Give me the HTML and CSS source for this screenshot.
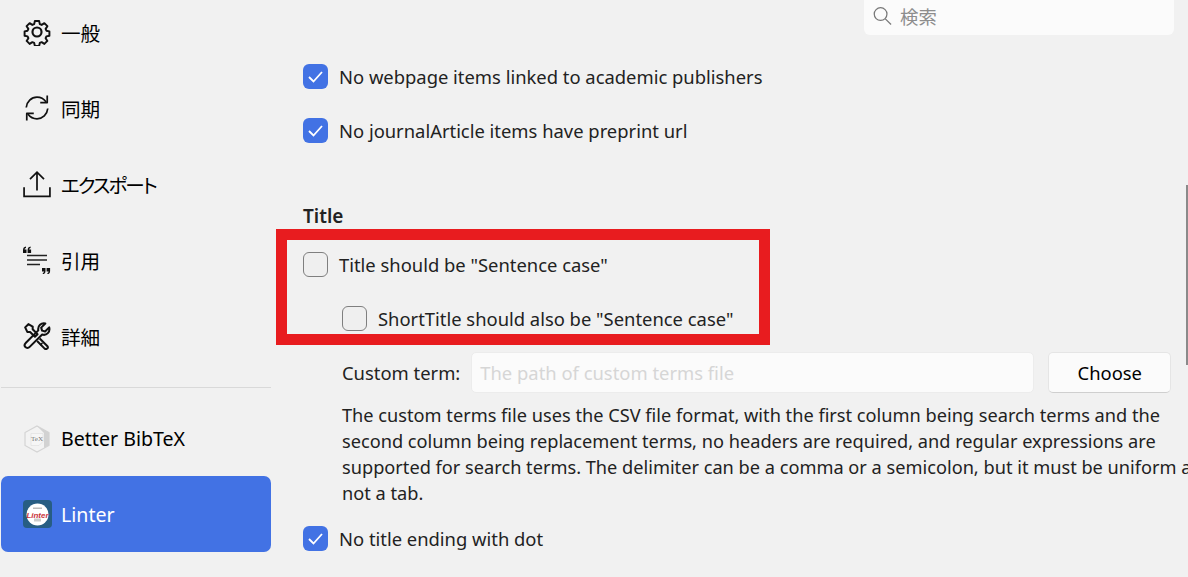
FILE: index.html
```html
<!DOCTYPE html>
<html lang="ja">
<head>
    <meta charset="UTF-8">
    <meta name="viewport" content="width=device-width, initial-scale=1.0">
    <title>Settings</title>
    <link rel="stylesheet" href="styles.css">
</head>
<body>
    <div class="sidebar">
        <ul class="nav">
            <li class="nav-item">
                <svg class="nav-icon" viewBox="0 0 26 26" fill="none" stroke="#111" stroke-width="2" stroke-linejoin="round">
                    <circle cx="13" cy="13" r="4.200"/>
                    <path d="M10.800 1.600h4.400l.7 3.300 1.900.8 2.800-1.800 3.100 3.100-1.800 2.800.8 1.900 3.100.7v4.400l-3.100.7-.8 1.900 1.800 2.800-3.100 3.100-2.800-1.800-1.900.8-.7 3.100h-4.400l-.7-3.100-1.900-.8-2.800 1.800-3.100-3.100 1.800-2.800-.8-1.900-3.100-.7v-4.400l3.100-.7.8-1.900-1.800-2.800 3.100-3.100 2.800 1.800 1.900-.8z" transform="translate(1.300 1.300) scale(.9)"/>
                </svg>
                <span>一般</span>
            </li>
            <li class="nav-item">
                <svg class="nav-icon" viewBox="0 0 26 26" fill="none" stroke="#111" stroke-width="1.600" stroke-linejoin="round">
                    <path d="M3 12.500C3.500 7 7.800 3 13 3c3.500 0 6.300 1.500 8.500 4.500"/>
                    <path d="M22.500 1.500V8H16"/>
                    <path d="M23 13.500C22.500 19 18.200 23 13 23c-3.500 0-6.300-1.500-8.500-4.500"/>
                    <path d="M3.500 24.500V18H10"/>
                </svg>
                <span>同期</span>
            </li>
            <li class="nav-item">
                <svg class="nav-icon" viewBox="0 0 26 26" fill="none" stroke="#111" stroke-width="1.600">
                    <path d="M1 16v8.500h24V16"/>
                    <path d="M13 19V2M6.500 8.500 13 2l6.500 6.500"/>
                </svg>
                <span class="kana">エクスポート</span>
            </li>
            <li class="nav-item">
                <svg class="nav-icon" viewBox="0 0 28 28">
                    <path d="M4 8.800h20v1.400H4zM4 13.300h20v1.400H4zM4 17.800h13v1.400H4z" fill="#222"/>
                    <path d="M0 7V4C0 2 1 .8 3 .5V2C2 2.200 1.600 2.800 1.600 3.500h1.900V7z" fill="#111"/>
                    <path d="M4.600 7V4c0-2 1-3.200 3-3.500V2c-1 .2-1.400.8-1.400 1.500h1.900V7z" fill="#111"/>
                    <path d="M19 22h3.500v3c0 2-1 3-2.700 3.300V27c.7-.2 1.200-.8 1.200-1.500h-2z" fill="#111"/>
                    <path d="M23.600 22h3.500v3c0 2-1 3-2.700 3.300V27c.7-.2 1.200-.8 1.200-1.500h-2z" fill="#111"/>
                </svg>
                <span>引用</span>
            </li>
            <li class="nav-item">
                <svg class="nav-icon" viewBox="0 0 26 26" fill="none" stroke="#111" stroke-width="1.900" stroke-linejoin="round">
                    <path d="M2 5 5 2l4 2.200v2.600l4.500 4.500-2.400 2.400L6.600 9.200H4z"/>
                    <path d="M24.300 5 20.500 8.800 17.700 8l-.8-2.800L20.700 1.400C17 .5 13.500 3.500 14.200 7.800L2.700 19.300c-1.700 1.700-1.500 3-.5 4s2.700 1.200 4-.2L17.800 11.700C22 13 25.500 9 24.300 5z"/>
                    <path d="m15.500 15.300 7 7c.9 1 .8 1.700 0 2.400-.8.700-1.500.7-2.400 0l-7-7"/>
                    <path d="m18 19.500-2 2" stroke-width="1.500"/>
                </svg>
                <span>詳細</span>
            </li>
        </ul>
        <div class="nav-divider"></div>
        <ul class="nav">
            <li class="nav-item nav-item-plugin">
                <svg class="nav-icon" viewBox="0 0 26 28">
                    <path d="M13 1 25 7.500v13L13 27 1 20.500v-13z" fill="#f3f3f3" stroke="#d4d4d4" stroke-width="1.200"/>
                    <path d="M13 1 25 7.500v13l-5 2.500V8z" fill="#d2d2d2"/>
                    <path d="M7 8.500h12v8l-4 4H7z" fill="#f6f6f6" stroke="#ddd" stroke-width=".6"/>
                    <text x="13" y="16" class="tex-mark">TeX</text>
                </svg>
                <span>Better BibTeX</span>
            </li>
            <li class="nav-item nav-item-active">
                <svg class="linter-icon" viewBox="0 0 29 28">
                    <rect width="29" height="28" rx="4" fill="#275d83"/>
                    <circle cx="14.500" cy="14.500" r="11" fill="#fff"/>
                    <rect x="10" y="7.500" width="9" height="1.500" fill="#bbb"/>
                    <rect x="11" y="18.500" width="7" height="3" fill="#ccc"/>
                    <text x="14.500" y="18" class="linter-mark">Linter</text>
                </svg>
                <span>Linter</span>
            </li>
        </ul>
    </div>

    <div class="main">
        <div class="topbar">
            <div class="search">
                <svg class="search-icon" viewBox="0 0 20 20" fill="none" stroke="#777" stroke-width="1.300">
                    <circle cx="8" cy="8" r="6.700"/>
                    <path d="m13 13 6 6"/>
                </svg>
                <span>検索</span>
            </div>
        </div>

        <label class="check-row">
            <span class="check check-on"><svg viewBox="0 0 25 25" fill="none" stroke="#fff" stroke-width="1.800"><path d="m6 13 4.500 4.500L19 8"/></svg></span>
            No webpage items linked to academic publishers
        </label>
        <label class="check-row">
            <span class="check check-on"><svg viewBox="0 0 25 25" fill="none" stroke="#fff" stroke-width="1.800"><path d="m6 13 4.500 4.500L19 8"/></svg></span>
            No journalArticle items have preprint url
        </label>

        <h3 class="section-title">Title</h3>
        <div class="highlighted">
            <label class="check-row">
                <span class="check"></span>
                Title should be "Sentence case"
            </label>
            <label class="check-row check-row-sub">
                <span class="check"></span>
                ShortTitle should also be "Sentence case"
            </label>
            <div class="red-box"></div>
        </div>

        <div class="term-row">
            <span>Custom term:</span>
            <div class="term-input">The path of custom terms file</div>
            <button class="btn">Choose</button>
        </div>
        <p class="term-help">
            The custom terms file uses the CSV file format, with the first column being search terms and the<br>
            second column being replacement terms, no headers are required, and regular expressions are<br>
            supported for search terms. The delimiter can be a comma or a semicolon, but it must be uniform and<br>
            not a tab.
        </p>
        <label class="check-row">
            <span class="check check-on"><svg viewBox="0 0 25 25" fill="none" stroke="#fff" stroke-width="1.800"><path d="m6 13 4.500 4.500L19 8"/></svg></span>
            No title ending with dot
        </label>
        <div class="scroll-thumb"></div>
    </div>
</body>
</html>
```
FILE: styles.css
```css
html, body {
    height: 100%;
}
body {
    font-family: 'Noto Sans', 'Noto Sans CJK JP', sans-serif;
    font-size: 18.4px;
    margin: 0;
    background: #f1f1f1;
    color: #222;
    display: flex;
    overflow: hidden;
}
.sidebar {
    width: 270px;
    flex-shrink: 0;
    margin: -6px 0 0 1px;
    font-size: 19.600px;
}
.nav {
    list-style: none;
    margin: 0;
    padding: 0;
}
.nav-item {
    height: 76px;
    padding-left: 22px;
    display: flex;
    align-items: center;
    gap: 10px;
    color: #000;
    border-radius: 7px;
    box-sizing: border-box;
}
.kana {
    font-feature-settings: "palt";
    letter-spacing: -2px;
}
.nav-icon {
    width: 28px;
    height: 28px;
    flex-shrink: 0;
}
.linter-icon {
    width: 29px;
    height: 28px;
    margin-right: -1px;
    flex-shrink: 0;
}
.nav-divider {
    height: 1px;
    background: #d9d9d9;
    margin: 13px 0;
}
.nav-item-plugin {
    height: 75px;
}
.nav-item-active {
    background: #4272e4;
    color: #fff;
}
.tex-mark {
    font-family: 'Liberation Serif', serif;
    font-size: 7px;
    fill: #777;
    text-anchor: middle;
}
.linter-mark {
    font-family: 'Liberation Sans', sans-serif;
    font-size: 8px;
    font-weight: bold;
    font-style: italic;
    fill: #c8323c;
    text-anchor: middle;
}

.main {
    flex: 1;
    min-width: 0;
    position: relative;
    padding-left: 32px;
    overflow: hidden;
}
.topbar {
    height: 49px;
    display: flex;
    justify-content: flex-end;
    padding-right: 14px;
}
.search {
    width: 310px;
    height: 35px;
    box-sizing: border-box;
    padding: 0 0 4px 9px;
    display: flex;
    align-items: center;
    gap: 8px;
    background: #fbfbfb;
    border-radius: 0 0 6px 6px;
    color: #8d8d8d;
}
.search-icon {
    width: 19px;
    height: 20px;
}
.check-row {
    height: 54px;
    display: flex;
    align-items: center;
    gap: 11px;
}
.check-row-sub {
    padding-left: 39px;
}
.check {
    width: 25px;
    height: 25px;
    box-sizing: border-box;
    border: 1.5px solid #7f7f7f;
    border-radius: 6px;
    background: #efefef;
    flex-shrink: 0;
}
.check-on {
    border: none;
    background: #4272e4;
}
.check-on svg {
    display: block;
}
.section-title {
    font-size: 19px;
    font-weight: 600;
    margin: 0;
    padding-top: 44px;
    height: 36px;
    line-height: 30px;
}
.highlighted {
    position: relative;
}
.red-box {
    position: absolute;
    left: -27px;
    top: -8px;
    width: 494px;
    height: 116px;
    box-sizing: border-box;
    border: 11px solid #e81c1f;
    outline: 1px solid #f1f1f1;
    outline-offset: -12px;
}
.term-row {
    margin: 7px 0 0 39px;
    display: flex;
    align-items: center;
    height: 41px;
}
.term-input {
    width: 563px;
    height: 41px;
    line-height: 39px;
    box-sizing: border-box;
    margin-left: 11px;
    padding-left: 8px;
    background: #fbfbfb;
    border: 1px solid #ececec;
    border-radius: 5px;
    color: #d6d6d6;
}
.btn {
    width: 123px;
    height: 41px;
    margin-left: 14px;
    font: inherit;
    color: #000;
    background: #fbfbfb;
    border: 1px solid #e5e5e5;
    border-bottom-color: #cfcfcf;
    border-radius: 5px;
}
.term-help {
    font-size: 18.200px;
    margin: 9px 0 0 39px;
    line-height: 26px;
    white-space: nowrap;
}
.term-help + .check-row {
    margin-top: 5px;
}
.scroll-thumb {
    position: absolute;
    right: 0;
    top: 185px;
    width: 2px;
    height: 180px;
    background: #8a8a8a;
}
```
